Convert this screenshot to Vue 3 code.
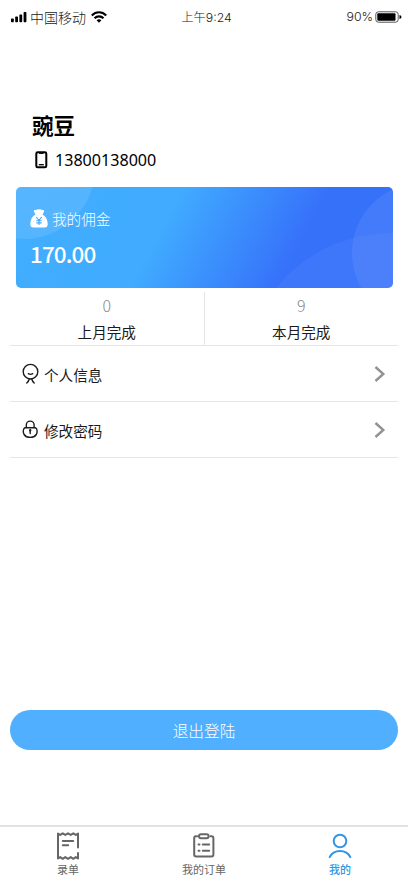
<template>
  <div class="page">
    <header class="status">
      <div class="carrier">
        <svg width="16" height="12" viewBox="0 0 16 12">
          <rect x="0" y="7.6" width="2.8" height="3.6" rx="0.7" />
          <rect x="4.2" y="5.6" width="2.8" height="5.6" rx="0.7" />
          <rect x="8.4" y="3.4" width="2.8" height="7.8" rx="0.7" />
          <rect x="12.6" y="1" width="2.8" height="10.2" rx="0.7" />
        </svg>
        <span class="carrier-name">中国移动</span>
        <svg class="wifi" width="16" height="12" viewBox="0 0 16 12">
          <g fill="none" stroke="#000" stroke-width="2.1">
            <path d="M0.8 4.4C5 0.2 11 0.2 15.2 4.4" />
            <path d="M3.5 7.2C6 4.8 10 4.8 12.5 7.2" />
          </g>
          <path d="M5.6 9.2Q8 7.3 10.4 9.2L8 11.8Z" />
        </svg>
      </div>
      <span class="time">上午9:24</span>
      <div class="power">
        <span>90%</span>
        <svg width="27" height="12" viewBox="0 0 27 12">
          <rect x="0.8" y="0.8" width="22.4" height="10.4" rx="2.6" fill="none" stroke="#555" />
          <rect x="2.3" y="2.2" width="18.2" height="7.6" rx="1" />
          <path d="M24.5 4q2 0.4 2 2t-2 2z" />
        </svg>
      </div>
    </header>

    <section class="user">
      <h1>豌豆</h1>
      <div class="phone">
        <svg width="13" height="18" viewBox="0 0 13 18" fill="none" stroke="#000">
          <rect x="1.3" y="1.3" width="10" height="15" rx="1.4" stroke-width="2" />
          <path d="M4 2h4.6" stroke-width="1.8" />
          <path d="M3.8 13.7h5" stroke-width="1.3" />
        </svg>
        <span>{{ user.phone }}</span>
      </div>
    </section>

    <section class="card">
      <svg class="card-bg" width="377" height="101" viewBox="0 0 377 101">
        <circle cx="8" cy="-19" r="71" fill="#fff" fill-opacity="0.1" />
        <circle cx="375" cy="194" r="148" fill="#fff" fill-opacity="0.045" />
        <circle cx="406" cy="66" r="70" fill="#fff" fill-opacity="0.07" />
      </svg>
      <div class="card-title">
        <svg width="18" height="19" viewBox="0 0 18 19">
          <path fill="#fff" d="M4 2.8C3.4 1.2 4.5 0.6 6 1Q7.6 0 9 0.5Q10.5 0 12 1C13.5 0.6 14.6 1.2 14 2.8L12.6 5.4C16 7.5 17.7 11 17.7 15Q17.7 18.5 14.7 18.5H3.3Q0.3 18.5 0.3 15C0.3 11 2 7.5 5.4 5.4Z" />
          <path fill="none" stroke="#43a9fd" stroke-width="1.1" d="M6.3 8L9 11.3L11.7 8M9 11.3V16M6.3 11.7H11.7M6.3 13.9H11.7" />
        </svg>
        <span>我的佣金</span>
      </div>
      <div class="amount">{{ user.commission }}</div>
    </section>

    <section class="stats">
      <div v-for="item in stats" :key="item.label" class="stat">
        <span class="count">{{ item.count }}</span>
        <span class="label">{{ item.label }}</span>
      </div>
    </section>

    <ul class="menu">
      <li v-for="item in menus" :key="item.key">
        <svg v-if="item.key === 'info'" width="18" height="22" viewBox="0 0 18 22" fill="none" stroke="#1c1c1c" stroke-width="1.4" stroke-linecap="round">
          <circle cx="8.5" cy="8.7" r="7.3" />
          <path d="M6.3 10.7Q8.5 12.1 10.7 10.7M7.2 16.2Q6.6 18.4 4.8 20M9.8 16.2Q10.4 18.4 12.2 20" />
        </svg>
        <svg v-else width="18" height="22" viewBox="0 0 18 22" fill="none" stroke="#1c1c1c" stroke-width="1.4" stroke-linecap="round">
          <path d="M4.3 8.6V6a3.9 3.9 0 0 1 7.8 0V8.6" />
          <path d="M3 8.7H13.4C15.6 10 15.5 13.3 14.3 15.5Q12.4 18.4 8.2 18.4T2.1 15.5C0.9 13.3 0.8 10 3 8.7Z" />
          <path d="M8.2 11.4v3.2" />
          <circle cx="8.2" cy="11.3" r="0.5" />
        </svg>
        <span>{{ item.text }}</span>
        <svg class="arrow" width="12" height="16" viewBox="0 0 12 16" fill="none" stroke="#929292" stroke-width="2.4">
          <path d="M1.5 1L9.3 8L1.5 15" />
        </svg>
      </li>
    </ul>

    <button class="logout">退出登陆</button>

    <nav class="tabbar">
      <a v-for="tab in tabs" :key="tab.key" class="tab" :class="{ active: tab.key === current }" @click="current = tab.key">
        <svg v-if="tab.key === 'record'" width="24" height="30" viewBox="0 0 24 30">
          <path d="M22 16.5V2.6L19.8 3.9L17.3 2.3L14.7 3.9L12 2.3L9.3 3.9L6.7 2.3L4.2 3.9L2 2.6V27.5L4.2 26.1L6.7 27.8L9.3 26.1L12 27.8L14.7 26.1L17.3 27.8L19.8 26.1L22 27.5V22" />
          <path d="M6.8 10H17.2M6.8 14.2H12.2" />
        </svg>
        <svg v-else-if="tab.key === 'order'" width="24" height="30" viewBox="0 0 24 30">
          <path d="M5.2 5.2H4Q2.2 5.2 2.2 7.2V23.6Q2.2 25.6 4.2 25.6H19.4Q21.4 25.6 21.4 23.6V7.2Q21.4 5.2 19.6 5.2H18.4" />
          <rect x="7" y="3.2" width="9.6" height="4" rx="2" />
          <path d="M6.5 13.4H7.5M10.8 13.4H17.2M6.5 19.8H7.5M10.8 19.8H17.2" />
        </svg>
        <svg v-else width="24" height="30" viewBox="0 0 24 30">
          <circle cx="12" cy="10" r="6.3" />
          <path d="M1.7 26.2C5.5 18 18.5 18 22.3 26.2" />
        </svg>
        <span>{{ tab.text }}</span>
      </a>
    </nav>
  </div>
</template>

<script setup>
import { ref } from 'vue'

const user = {
  phone: '13800138000',
  commission: '170.00',
}

const stats = [
  { label: '上月完成', count: 0 },
  { label: '本月完成', count: 9 },
]

const menus = [
  { key: 'info', text: '个人信息' },
  { key: 'password', text: '修改密码' },
]

const tabs = [
  { key: 'record', text: '录单' },
  { key: 'order', text: '我的订单' },
  { key: 'mine', text: '我的' },
]

const current = ref('mine')
</script>

<style>
body {
  margin: 0;
  background: #fff;
}
</style>

<style scoped>
.page {
  display: flex;
  flex-direction: column;
  box-sizing: border-box;
  width: 408px;
  height: 883px;
  overflow: hidden;
  color: #1a1a1a;
  font-family: 'Noto Sans CJK SC', sans-serif;
}

svg {
  display: block;
  flex-shrink: 0;
}

.status {
  display: grid;
  grid-template-columns: 1fr auto 1fr;
  align-items: center;
  height: 33px;
  padding: 0 6px 0 11px;
  font-family: 'Inter', 'Noto Sans CJK SC', sans-serif;
  font-size: 12.3px;
  font-weight: 300;
  color: #222;
}

.carrier,
.power {
  display: flex;
  align-items: center;
}

.carrier-name {
  margin: 0 5px 0 3px;
  font-size: 14px;
}

.power {
  justify-content: flex-end;
  gap: 2px;
}

.user {
  height: 154px;
  padding-left: 32px;
  color: #000;
}

h1 {
  margin: 76px 0 0;
  font-size: 21.5px;
  font-weight: 700;
  line-height: 32px;
}

.phone {
  display: flex;
  align-items: center;
  gap: 7px;
  height: 38px;
  padding-left: 3px;
  font-family: 'Noto Sans', sans-serif;
  font-size: 16.1px;
}

.card {
  position: relative;
  box-sizing: border-box;
  width: 377px;
  height: 101px;
  margin-left: 16px;
  padding: 20px 14px 0;
  overflow: hidden;
  border-radius: 5px;
  background: linear-gradient(118deg, #42aefe 0%, #40abff 39%, #3671fa 73%, #3671fa 100%);
  color: #fff;
}

.card-bg {
  position: absolute;
  top: 0;
  left: 0;
}

.card-title {
  position: relative;
  display: flex;
  align-items: center;
  gap: 4px;
  height: 22px;
  font-size: 14.6px;
  font-weight: 300;
}

.amount {
  position: relative;
  height: 48px;
  font-size: 22.5px;
  font-weight: 500;
  letter-spacing: -0.9px;
  line-height: 49px;
}

.stats {
  display: flex;
  height: 53px;
  margin: 4px 10px 0;
  border-bottom: 1px solid #e6e6e6;
}

.stat {
  display: flex;
  flex: 1;
  flex-direction: column;
  align-items: center;
}

.stat + .stat {
  border-left: 1px solid #e6e6e6;
}

.count {
  height: 27px;
  font-size: 16px;
  font-weight: 300;
  line-height: 27px;
  color: #888;
}

.label {
  font-size: 14.6px;
  line-height: 26px;
}

.menu {
  margin: 0 10px;
  padding: 0;
  list-style: none;
}

.menu li {
  display: flex;
  align-items: center;
  gap: 4px;
  height: 55px;
  padding: 0 12px;
  border-bottom: 1px solid #e6e6e6;
  font-size: 14.6px;
}

.menu span {
  padding-top: 1px;
}

.arrow {
  margin-left: auto;
}

.logout {
  height: 40px;
  margin: 252px 10px 0;
  padding: 0;
  border: 0;
  border-radius: 20px;
  background: #50affe;
  color: #fff;
  font-family: inherit;
  font-size: 15.7px;
  font-weight: 300;
}

.tabbar {
  display: flex;
  height: 56px;
  margin-top: auto;
  border-top: 2px solid #e2e2e2;
}

.tab {
  display: flex;
  flex: 1;
  flex-direction: column;
  align-items: center;
  padding-top: 4px;
  color: #666;
  font-size: 11px;
  line-height: 16px;
}

.tab svg {
  fill: none;
  stroke: currentColor;
  stroke-width: 2;
  stroke-linecap: round;
  stroke-linejoin: round;
}

.tab.active {
  color: #3296e6;
}

.tab.active span {
  font-weight: 500;
}
</style>
